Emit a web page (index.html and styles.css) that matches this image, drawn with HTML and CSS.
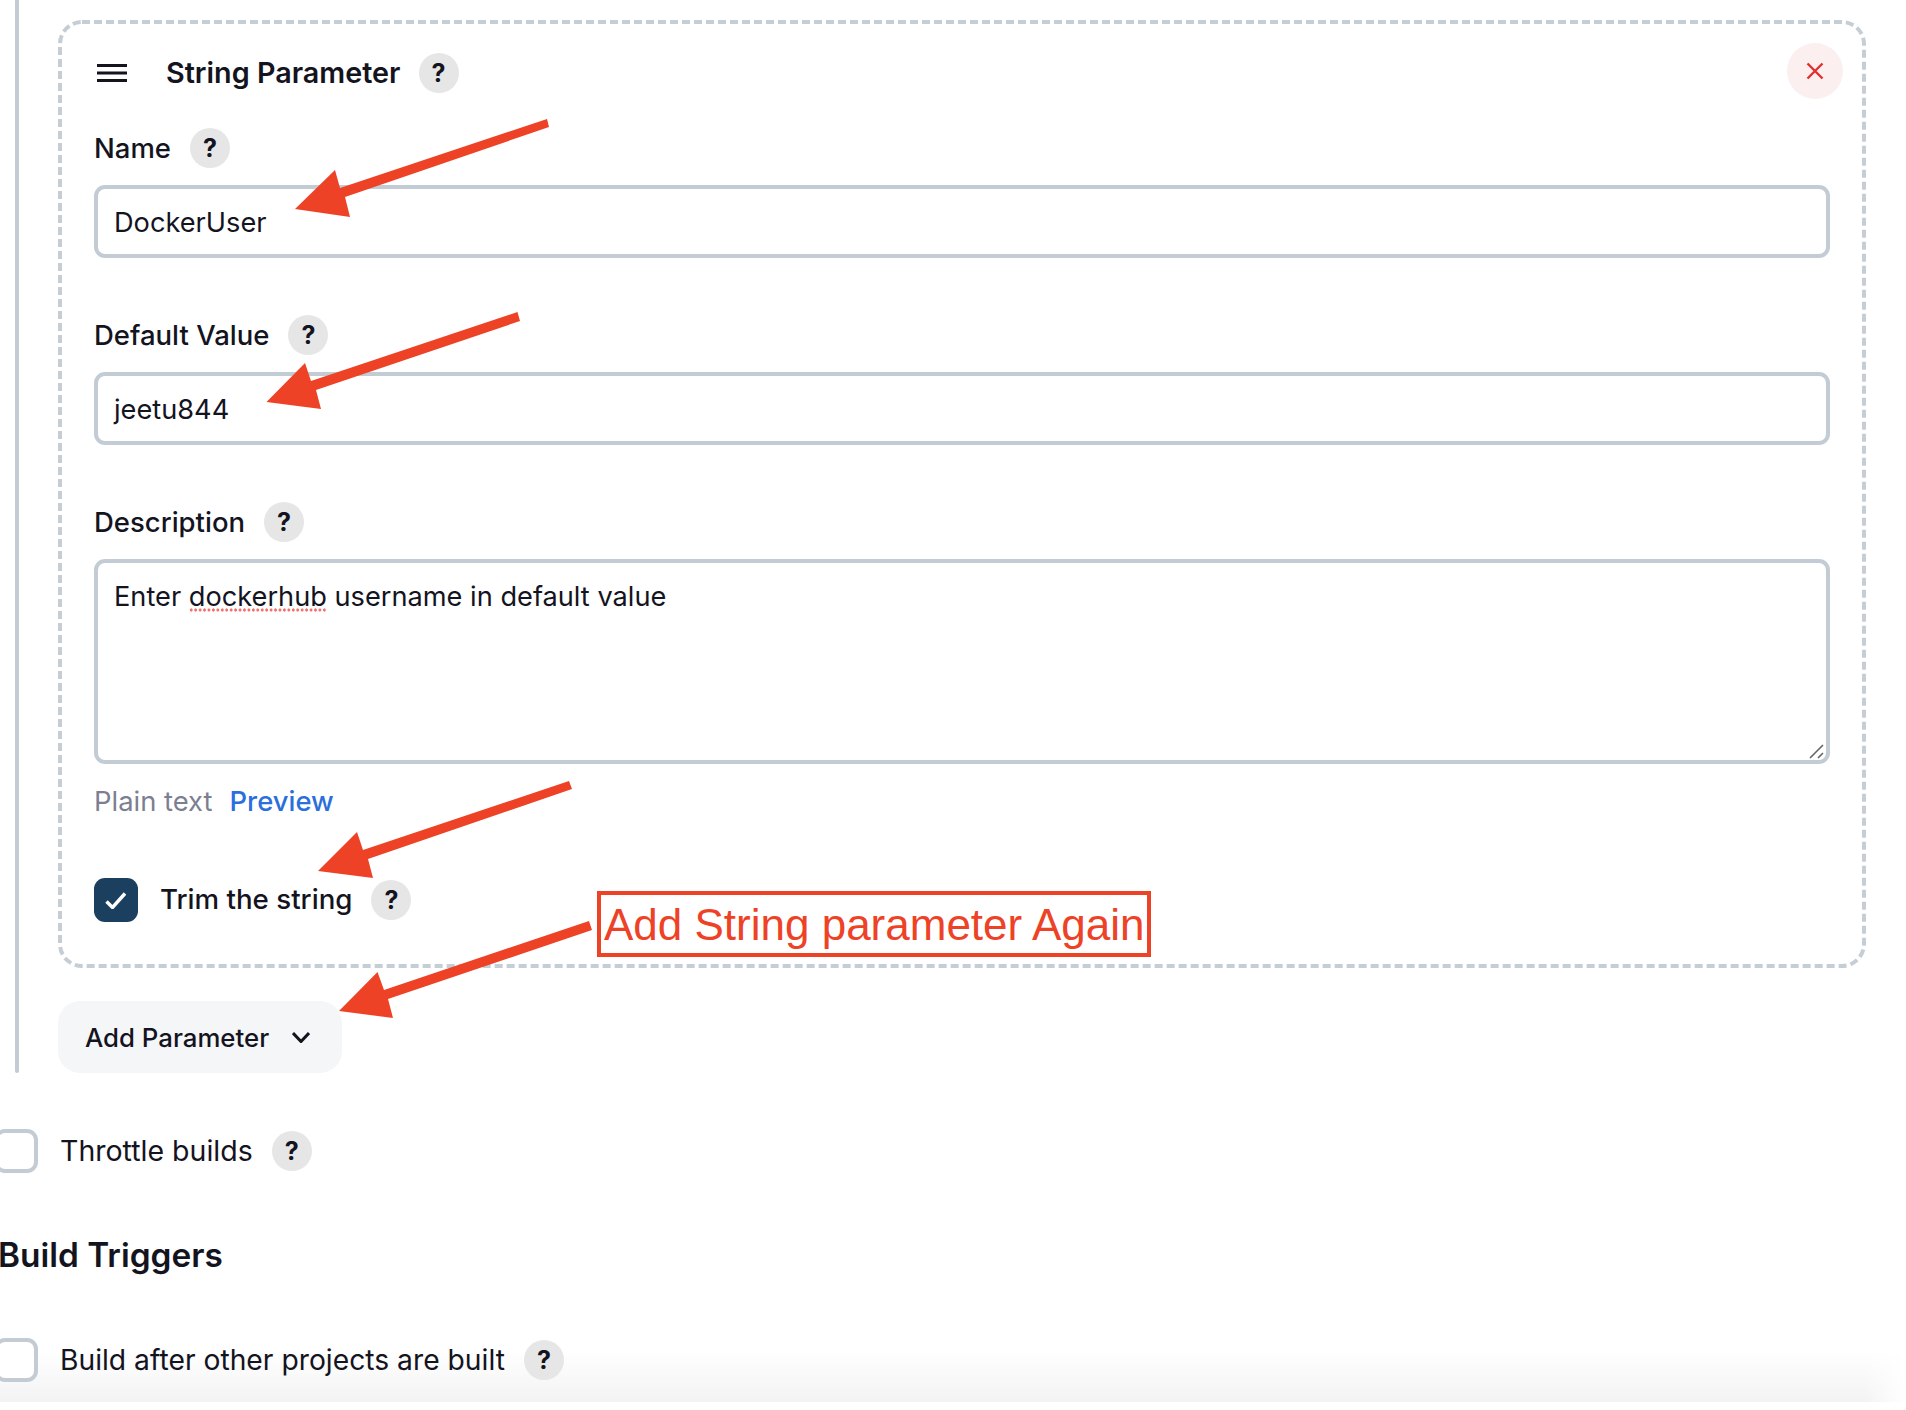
FILE: index.html
```html
<!DOCTYPE html>
<html lang="en">
<head>
<meta charset="utf-8">
<title>String Parameter</title>
<link rel="stylesheet" href="styles.css">
</head>
<body>
<div class="page">
  <div class="fade"></div>
  <section class="params">
    <div class="card">
      <svg class="card-outline" width="1808" height="948" viewBox="0 0 1808 948"><rect x="2" y="2" width="1804" height="944" rx="22" ry="22"/></svg>
      <div class="card-head">
        <svg class="drag" width="30" height="18" viewBox="0 0 30 18"><path d="M0 1.5H30M0 9H30M0 16.5H30"/></svg>
        <span class="card-title">String Parameter</span>
        <span class="help">?</span>
        <button class="close" type="button"><svg width="18" height="18" viewBox="0 0 18 18"><path d="M1.5 1.5L16.5 16.5M16.5 1.5L1.5 16.5"/></svg></button>
      </div>
      <div class="field">
        <div class="label-row"><span>Name</span><span class="help">?</span></div>
        <div class="input">DockerUser</div>
      </div>
      <div class="field">
        <div class="label-row"><span>Default Value</span><span class="help">?</span></div>
        <div class="input">jeetu844</div>
      </div>
      <div class="field">
        <div class="label-row"><span>Description</span><span class="help">?</span></div>
        <div class="textarea">Enter <span class="misspelt">dockerhub</span> username in default value
          <svg class="grip" width="15" height="15" viewBox="0 0 15 15"><path d="M1 14L14 1M9 14L14 9"/></svg>
        </div>
        <div class="format"><span class="plain">Plain text</span><a class="preview" href="#">Preview</a></div>
      </div>
      <div class="check-row trim">
        <span class="box checked"><svg width="22" height="17" viewBox="0 0 22 17"><path d="M1.5 9.5L7.5 15.5L20 1.5"/></svg></span>
        <span class="row-text">Trim the string</span>
        <span class="help">?</span>
      </div>
    </div>
    <button class="add" type="button"><span class="add-text">Add Parameter</span><svg width="18" height="11" viewBox="0 0 18 11"><path d="M1 1L9 9.5L17 1"/></svg></button>
  </section>
  <div class="check-row throttle">
    <span class="box"></span>
    <span>Throttle builds</span>
    <span class="help">?</span>
  </div>
  <h2 class="section-title">Build Triggers</h2>
  <div class="check-row after">
    <span class="box"></span>
    <span>Build after other projects are built</span>
    <span class="help">?</span>
  </div>
  <div class="callout">Add String parameter Again</div>
  <svg class="arrows" width="1906" height="1410" viewBox="0 0 1906 1410">
    <polygon points="547,119 549,127 345,197 350,217 295,209 335,170 340,188"/>
    <polygon points="517.5,312 520,321 316,390 321,409 266.5,402 305,363 311,381"/>
    <polygon points="569,781 572,789 368,859 373,878 318,871 357,832 363,850"/>
    <polygon points="589,921 592,930 388,999 393,1018 339,1011 377.5,972 384,990"/>
  </svg>
</div>
</body>
</html>
```
FILE: styles.css
```css
* { box-sizing: border-box; }
html, body { margin: 0; height: 100%; background: #fff; }
body { overflow: hidden; }
.page {
  position: relative;
  width: 1906px;
  height: 1410px;
  overflow: hidden;
  font-family: Inter, "Liberation Sans", sans-serif;
  font-size: 28px;
  line-height: 40px;
  color: #14141f;
}
.fade {
  position: absolute;
  left: 0;
  right: 0;
  top: 1350px;
  height: 52px;
  background: linear-gradient(to bottom, rgba(243,243,243,0), #f3f3f3);
  -webkit-mask-image: linear-gradient(to right, #000 1865px, transparent 1906px);
  mask-image: linear-gradient(to right, #000 1865px, transparent 1906px);
}
.params {
  position: relative;
  margin-left: 15px;
  padding: 20px 0 0 43px;
  width: 1851px;
  height: 1073px;
}
.params::before {
  content: "";
  position: absolute;
  left: 0;
  top: 0;
  bottom: 0;
  width: 3.5px;
  border-radius: 0 0 2px 2px;
  background: #c3ccd4;
}
.card {
  position: relative;
  width: 1808px;
  height: 948px;
  padding: 33px 36px 0;
}
.card-outline {
  position: absolute;
  left: 0;
  top: 0;
  fill: none;
  stroke: #c6ced5;
  stroke-width: 4;
  stroke-dasharray: 8 4;
}
.card-head {
  display: flex;
  align-items: center;
  height: 40px;
  font-weight: 600;
  font-size: 28.75px;
}
.drag { margin: -1px 39px 0 3px; fill: none; stroke: #14141f; stroke-width: 3; }
.card-title { margin-right: 18px; }
.help {
  display: inline-flex;
  flex: none;
  align-items: center;
  justify-content: center;
  width: 40px;
  height: 40px;
  border-radius: 50%;
  background: #e6e6e7;
  font-weight: 700;
  font-size: 25px;
  color: #14141f;
}
.close {
  margin: -4px -13px 0 auto;
  width: 56px;
  height: 56px;
  flex: none;
  border: 0;
  padding: 0;
  display: flex;
  align-items: center;
  justify-content: center;
  border-radius: 50%;
  background: #fbefef;
}
.close svg { fill: none; stroke: #e0312f; stroke-width: 2.4; }
.field { margin-top: 35px; }
.field + .field { margin-top: 57px; }
.label-row {
  display: flex;
  align-items: center;
  gap: 19px;
  height: 40px;
  font-weight: 500;
  font-size: 27.5px;
}
.input, .textarea {
  margin-top: 17px;
  width: 1736px;
  border: 4px solid #c3ccd4;
  border-radius: 11px;
  padding: 0 16px;
  background: #fff;
  font-size: 27.2px;
}
.input { height: 73px; line-height: 67px; }
.textarea { position: relative; height: 205px; padding-top: 14px; line-height: 40px; }
.misspelt {
  padding-bottom: 1px;
  background-image: radial-gradient(circle, #f4726a 1.4px, transparent 1.8px);
  background-size: 4.45px 4px;
  background-repeat: repeat-x;
  background-position: 0 calc(100% - 2px);
}
.grip {
  position: absolute;
  right: 2px;
  bottom: 1px;
  fill: none;
  stroke: #666;
  stroke-width: 1.6;
}
.format { margin-top: 17px; display: flex; gap: 17px; color: #7c7f92; font-size: 27.4px; }
.preview { color: #2b6fdc; text-decoration: none; font-weight: 500; }
.check-row {
  display: flex;
  align-items: center;
  height: 44px;
  gap: 22px;
}
.check-row .help { margin-left: -3px; }
.trim { margin-top: 57px; font-weight: 450; font-size: 27.7px; }
.row-text { margin-top: -2px; }
.box {
  flex: none;
  width: 44px;
  height: 44px;
  border: 4px solid #c3ccd4;
  border-radius: 11px;
  display: flex;
  align-items: center;
  justify-content: center;
  background: #fff;
}
.box.checked { border: 0; background: #1a3f5f; }
.box svg { fill: none; stroke: #fff; stroke-width: 3.4; }
.add {
  display: flex;
  align-items: center;
  gap: 23px;
  margin-top: 33px;
  height: 72px;
  width: 284px;
  border: 0;
  border-radius: 22px;
  padding: 0 0 0 27px;
  background: #f5f6f8;
  font: inherit;
  font-size: 25.8px;
  font-weight: 450;
  color: #14141f;
}
.add-text { margin-top: 2px; }
.add svg { fill: none; stroke: #14141f; stroke-width: 3; }
.throttle, .after { margin-left: -6px; position: relative; font-size: 28.25px; }
.throttle { margin-top: 56px; font-size: 28.5px; }
.after { margin-top: 58px; }
.section-title {
  margin: 57px 0 0 -2px;
  font-size: 33.4px;
  line-height: 50px;
  font-weight: 600;
}
.callout {
  position: absolute;
  left: 597px;
  top: 891px;
  width: 554px;
  height: 66px;
  border: 4.5px solid #ee4227;
  font-family: "Liberation Sans", Arial, sans-serif;
  font-size: 44px;
  line-height: 59px;
  color: #ee4227;
  padding-left: 3px;
  white-space: nowrap;
  background: #fff;
}
.arrows {
  position: absolute;
  left: 0;
  top: 0;
  fill: #ee4227;
  pointer-events: none;
}
```
